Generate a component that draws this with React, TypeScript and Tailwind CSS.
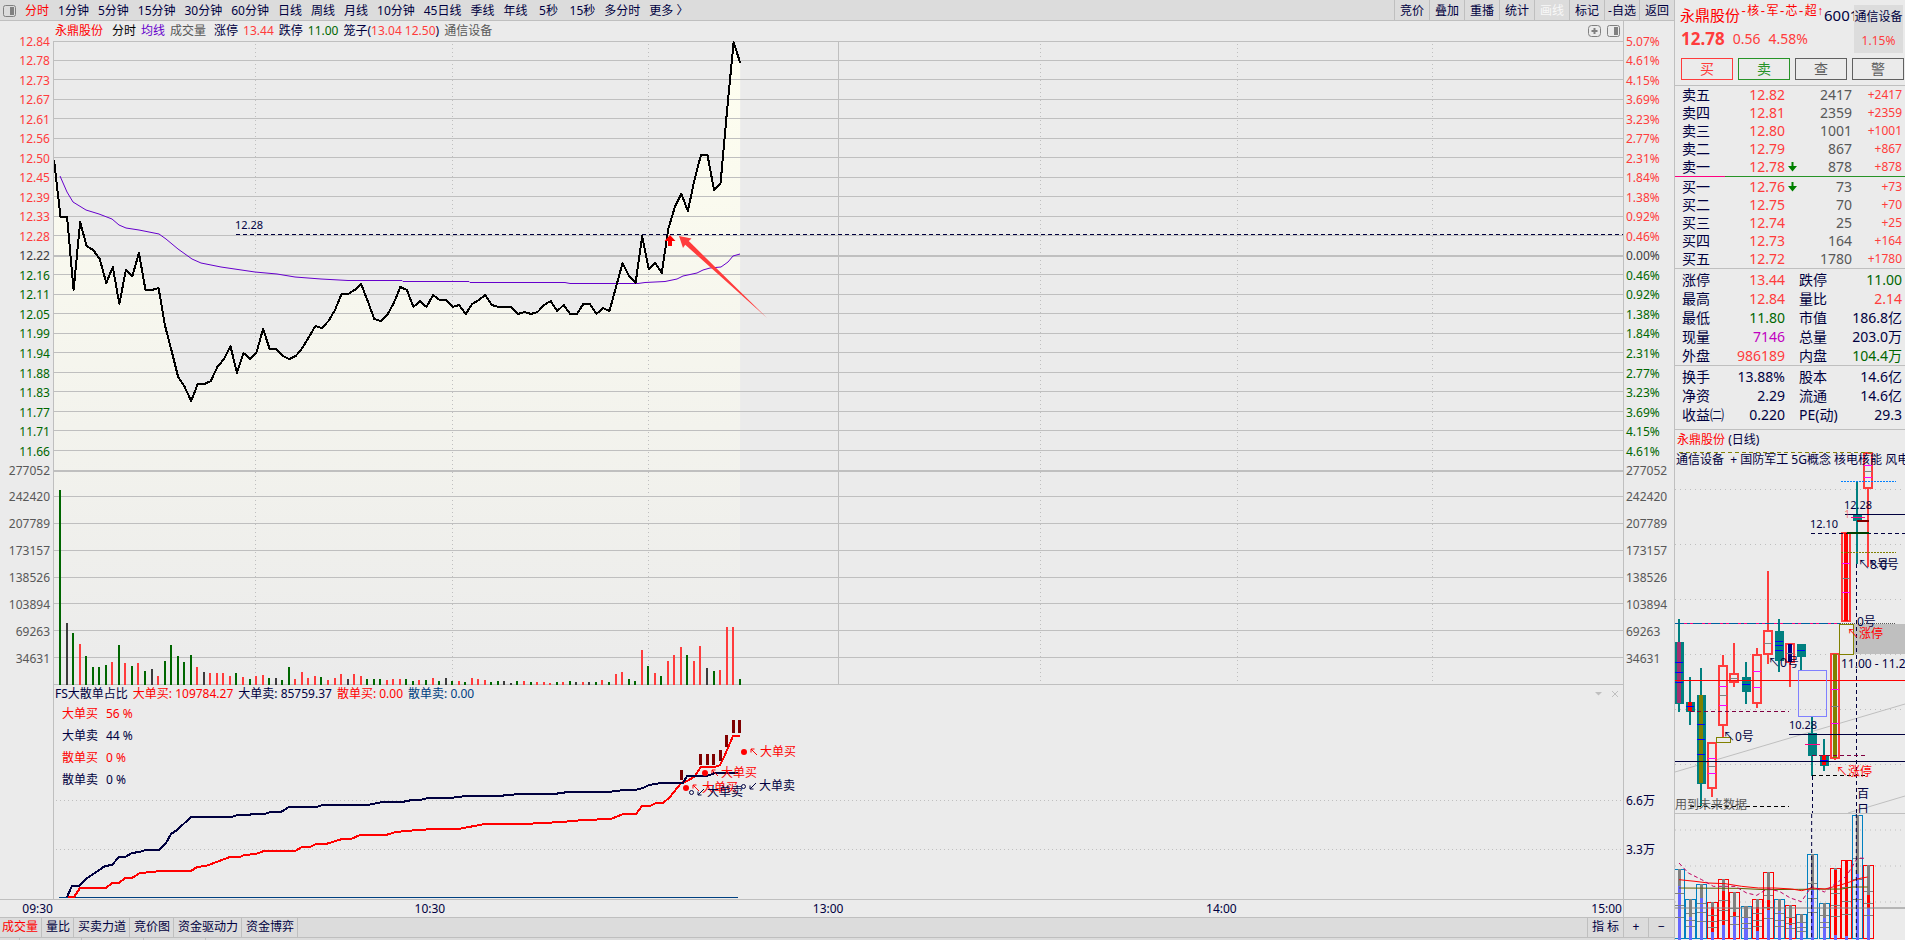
import { clsx } from "clsx";

const periods = [
  "分时", "1分钟", "5分钟", "15分钟", "30分钟", "60分钟", "日线", "周线", "月线", "10分钟",
  "45日线", "季线", "年线", "5秒", "15秒", "多分时", "更多 〉",
];
const tools = ["竞价", "叠加", "重播", "统计", "画线", "标记", "-自选", "返回"];
const tabs = ["成交量", "量比", "买卖力道", "竞价图", "资金驱动力", "资金博弈"];

const priceLabels = [
  "12.84", "12.78", "12.73", "12.67", "12.61", "12.56", "12.50", "12.45", "12.39", "12.33", "12.28",
  "12.22", "12.16", "12.11", "12.05", "11.99", "11.94", "11.88", "11.83", "11.77", "11.71", "11.66",
];
const percentLabels = [
  "5.07%", "4.61%", "4.15%", "3.69%", "3.23%", "2.77%", "2.31%", "1.84%", "1.38%", "0.92%", "0.46%",
  "0.00%", "0.46%", "0.92%", "1.38%", "1.84%", "2.31%", "2.77%", "3.23%", "3.69%", "4.15%", "4.61%",
];
const volumeLabels = ["242420", "207789", "173157", "138526", "103894", "69263", "34631"];

// plot coordinates: x 54..1623 covers 240 minutes
const LEFT = 54;
const STEP = 6.535;

const priceRows = [
  41, 60, 79, 99, 118, 138, 157, 177, 196, 216, 235, 274, 294, 313, 333, 352, 372, 391, 411, 430, 450,
  496, 523, 550, 577, 603, 630, 657, 684,
];
const timeCols = [255, 452, 648, 1040, 1237, 1432];

const price = [
  160, 217, 217, 290, 222, 246, 250, 259, 283, 267, 304, 270, 276, 253, 290, 290, 288, 326, 351, 377,
  387, 401, 384, 384, 381, 367, 359, 346, 373, 353, 359, 352, 329, 349, 349, 356, 359, 356, 348, 337,
  326, 328, 321, 310, 294, 294, 290, 284, 301, 319, 321, 315, 303, 287, 290, 307, 301, 307, 295, 300,
  300, 307, 305, 314, 304, 300, 295, 305, 307, 307, 307, 314, 312, 314, 312, 305, 301, 311, 305, 314,
  314, 304, 304, 314, 308, 311, 287, 263, 276, 283, 236, 269, 263, 273, 229, 207, 194, 211, 180, 155,
  155, 190, 183, 110, 42, 63,
];

const average =
  "60,176 67,192 73,202 86,210 99,214 112,219 119,225 126,228 139,230 159,234 166,239 178,249 192,259 201,263 221,267 255,272 277,274 295,277 321,279 348,280.5 402,280.5 403,281.5 469,281.5 470,282.5 565,282.5 570,283.5 638,283.5 645,282.5 665,281.5 677,279 683,276 697,273 703,270 710,268 721,267 728,262 733,256 740,254";

// r = up, g = down, k = flat
const volume = (
  "g195 k62 g52 r41 g29 g18 g18 g20 r23 g40 r22 g19 r22 g14 k16 r9 g24 g40 g29 g23 g30 r18 k13 r12 r12 r12 r9 g12 r8 g6 " +
  "r9 r10 g7 k7 g5 g18 r6 r13 r7 r9 g8 r5 r7 r11 k6 r11 r9 g6 g6 g6 r5 r6 r6 g6 g4 r5 g5 r7 g4 k7 g4 r4 g3 r7 r6 r5 g3 " +
  "g4 k4 k2 g4 r4 g3 r3 r3 r2 g3 r3 g4 k3 r3 k3 g3 r5 g3 r11 r13 g6 g4 r35 g19 r12 g9 r24 r30 r38 g30 r24 r39 k17 g14 " +
  "r15 r58 r58 g6"
).split(" ");
const volumeColor: Record<string, string> = { r: "#ff3c3c", g: "#006600", k: "#3c3c3c" };

const bigSell =
  "67,897 72,886 79,886 86,879 105,866 112,865 119,857 125,857 132,853 139,852 146,850 159,850 166,843 171,834 177,830 191,817 231,817 238,815 249,815 252,814 265,814 270,812 281,812 289,807 317,807 322,805 367,805 383,802 402,802 412,800 420,800 428,798 450,798 466,796 498,796 520,794 554,794 568,792 608,792 624,790 635,790 643,788 649,785 661,783 683,783 687,776 707,776 715,773 738,773";
const bigBuy =
  "68,897 74,897 80,888 106,888 112,883 119,883 125,878 132,878 140,873 153,872 159,871 191,871 197,867 206,866 230,857 240,857 244,855 256,854 264,851 295,851 302,847 310,847 316,844 326,844 342,839 351,839 360,835 386,835 396,832 418,830 434,829 458,829 485,824 524,824 562,822 584,820 611,819 623,814 636,814 642,806 650,806 656,803 663,803 670,797 681,783 687,781 694,777 701,767 715,767 720,765 724,757 733,736 740,736";
const signals = [
  [680, 770, 10], [699, 754, 11], [706, 754, 11], [712, 754, 11],
  [719, 750, 11], [725, 735, 12], [732, 720, 13], [738, 720, 13],
];

// overlay labels of the large-order pane, offsets from the plot's corner
const marks = [
  { x: 686, y: 788, text: "大单买", buy: true },
  { x: 705, y: 773, text: "大单买", buy: true },
  { x: 744, y: 752, text: "大单买", buy: true },
  { x: 692, y: 792, text: "大单卖", buy: false },
  { x: 744, y: 786, text: "大单卖", buy: false },
];

const asks = [
  ["卖五", "12.82", "", "2417", "+2417"],
  ["卖四", "12.81", "", "2359", "+2359"],
  ["卖三", "12.80", "", "1001", "+1001"],
  ["卖二", "12.79", "", "867", "+867"],
  ["卖一", "12.78", "down", "878", "+878"],
];
const bids = [
  ["买一", "12.76", "down", "73", "+73"],
  ["买二", "12.75", "", "70", "+70"],
  ["买三", "12.74", "", "25", "+25"],
  ["买四", "12.73", "", "164", "+164"],
  ["买五", "12.72", "", "1780", "+1780"],
];

const R = "text-[#ff3c3c]";
const G = "text-[#006600]";
const N = "text-[#00003f]";
const stats = [
  ["涨停", "13.44", R, "跌停", "11.00", G],
  ["最高", "12.84", R, "量比", "2.14", R],
  ["最低", "11.80", G, "市值", "186.8亿", N],
  ["现量", "7146", "text-[#c000c0]", "总量", "203.0万", N],
  ["外盘", "986189", R, "内盘", "104.4万", G],
];
const basics = [
  ["换手", "13.88%", N, "股本", "14.6亿", N],
  ["净资", "2.29", N, "流通", "14.6亿", N],
  ["收益㈡", "0.220", N, "PE(动)", "29.3", N],
];

function PanelIcon({ className }: { className?: string }) {
  return (
    <svg viewBox="0 0 13 12" className={clsx("w-[13px] h-[12px]", className)} fill="none">
      <rect x="0.5" y="0.5" width="12" height="11" rx="2" stroke="#808080" />
      <rect x="7" y="2" width="4" height="8" fill="#808080" />
    </svg>
  );
}

function DownArrow() {
  return (
    <svg viewBox="0 0 9 10" className="w-[9px] h-[10px]">
      <path d="M3.500 0h2v4H9L4.500 9.500 0 4h3.500z" fill="#008000" />
    </svg>
  );
}

function labelTone(i: number) {
  if (i < 11) return "text-[#ff3c3c]";
  return i === 11 ? "text-[#3c3c3c]" : "text-[#006600]";
}

function Axis({ labels, side }: { labels: string[]; side: "left" | "right" }) {
  return (
    <div
      className={clsx(
        "shrink-0 border-[#bfbfbf] text-[#585858]",
        side === "left" ? "w-[54px] border-r pr-[3px] text-right" : "w-[51px] border-l pl-[2px]"
      )}
    >
      <div className="-mt-[9px] h-[449px] flex flex-col">
        {labels.map((l, i) => (
          <div key={i} className={clsx("flex-1 flex flex-col justify-center", labelTone(i))}>{l}</div>
        ))}
        <div className="flex-1 flex flex-col justify-center">277052</div>
      </div>
      <div className="mt-[3px] h-[188px] flex flex-col">
        {volumeLabels.map(l => (
          <div key={l} className="flex-1 flex flex-col justify-center">{l}</div>
        ))}
      </div>
    </div>
  );
}

function PriceChart() {
  const points = price.map((y, i) => `${LEFT + i * STEP},${y}`);
  return (
    <svg viewBox="54 41 1569 644" preserveAspectRatio="none" className="absolute inset-0 w-full h-full">
      <defs>
        <linearGradient id="area" gradientUnits="userSpaceOnUse" x1="0" y1="41" x2="0" y2="685">
          <stop offset="0" stopColor="#fffff0" />
          <stop offset="1" stopColor="#ebebeb" />
        </linearGradient>
      </defs>
      <polygon points={`${points.join(" ")} 740,685 54,685`} fill="url(#area)" />
      <g fill="#bfbfbf" shapeRendering="crispEdges">
        {priceRows.map(y => <rect key={y} x="54" y={y} width="1569" height="1" />)}
        <rect x="54" y="255" width="1569" height="2" />
        <rect x="54" y="470" width="1569" height="2" />
        <rect x="838" y="41" width="1" height="644" />
      </g>
      <g stroke="#bfbfbf" strokeDasharray="1 3" shapeRendering="crispEdges">
        {timeCols.map(x => <path key={x} d={`M${x + 0.5} 44V684`} />)}
      </g>
      <g shapeRendering="crispEdges">
        {volume.map((v, i) => {
          const h = Number(v.slice(1));
          return (
            <rect key={i} x={Math.floor(LEFT + (i + 1) * STEP) - 1} y={685 - h} width="2" height={h} fill={volumeColor[v[0]]} />
          );
        })}
      </g>
      <polyline points={average} fill="none" stroke="#6600cc" />
      <polyline points={points.join(" ")} fill="none" stroke="#000" strokeWidth="2" strokeLinejoin="round" shapeRendering="crispEdges" />
      <path d="M236 234.500H1623" stroke="#00003f" strokeDasharray="4 3" shapeRendering="crispEdges" />
      <path d="M670 235l5.500 6h-3.500v5h-4v-5h-3.500z" fill="#f00" />
      <path d="M679 236l12.500 2.500-2.700 2.600L767 318 685.200 244.700 683 248z" fill="#ff3c3c" />
    </svg>
  );
}

function OrderChart() {
  return (
    <svg viewBox="54 685 1569 214" preserveAspectRatio="none" className="absolute inset-0 w-full h-full">
      <g stroke="#bfbfbf" strokeDasharray="1 3" shapeRendering="crispEdges">
        <path d="M56 800.500H1623M56 849.500H1623" />
      </g>
      <path d="M59 897.500H738" stroke="#004080" shapeRendering="crispEdges" />
      <g fill="none" strokeWidth="2" shapeRendering="crispEdges">
        <polyline points={bigBuy} stroke="#f00" />
        <polyline points={bigSell} stroke="#00003f" />
      </g>
      {signals.map(([x, y, h]) => <rect key={x} x={x} y={y} width="3" height={h} fill="#7f0000" />)}
    </svg>
  );
}

type Candle = {
  x: number;
  wick: [number, number];
  body: [number, number];
  up?: boolean;
  core?: string;
  ticks?: [number, string][];
};

const B = "#0000ff";
const M = "#ff00ff";
const K = "#808080";
const candles: Candle[] = [
  { x: 1679, wick: [619, 712], body: [642, 703], core: "#a03070", ticks: [[662, B], [672, B], [682, B]] },
  { x: 1690, wick: [677, 725], body: [702, 711], core: "#f00", ticks: [[706, B]] },
  { x: 1701, wick: [668, 806], body: [695, 783], core: "#808000", ticks: [[724, B], [739, B], [754, B]] },
  { x: 1712, wick: [742, 797], body: [743, 788], up: true, ticks: [[758, M], [766, K], [773, M]] },
  { x: 1723, wick: [655, 737], body: [666, 725], up: true, ticks: [[686, M], [695, K], [705, M]] },
  { x: 1734, wick: [643, 687], body: [674, 682], up: true, ticks: [[678, K]] },
  { x: 1746, wick: [662, 704], body: [677, 691], ticks: [[684, B]] },
  { x: 1757, wick: [648, 708], body: [655, 703], up: true, ticks: [[671, M], [687, M]] },
  { x: 1768, wick: [571, 664], body: [631, 654], up: true, ticks: [[643, K]] },
  { x: 1779, wick: [619, 672], body: [631, 660], ticks: [[641, B], [645, B], [650, B]] },
  { x: 1790, wick: [644, 687], body: [644, 662], up: true, core: "#000080", ticks: [[653, K]] },
  { x: 1801, wick: [644, 670], body: [644, 656], ticks: [[650, B]] },
  { x: 1812, wick: [716, 776], body: [733, 755], ticks: [[744, M]] },
  { x: 1824, wick: [739, 771], body: [755, 765], core: "#f00", ticks: [[760, B]] },
  { x: 1835, wick: [654, 760], body: [654, 758], up: true, core: "#808000", ticks: [[689, M], [706, K], [723, M]] },
  { x: 1846, wick: [533, 621], body: [533, 621], up: true, core: "#f00", ticks: [[563, M], [578, K], [592, M]] },
  { x: 1857, wick: [482, 564], body: [514, 520], ticks: [[517, "#ff0080"]] },
  { x: 1868, wick: [453, 567], body: [453, 488], up: true, ticks: [[465, M], [471, K], [477, M]] },
];

function DailyCandles() {
  return (
    <svg
      viewBox="1675 450 230 363"
      className="block w-[230px] h-[363px] text-[12px]"
      fill="#00003f"
    >
      <g stroke="#bfbfbf" fill="none">
        <path d="M1675 489.500h230M1675 544.500h230M1675 599.500h230M1675 654.500h230M1675 709.500h230M1675 764.500h230" strokeDasharray="1 4" />
        <path d="M1675 772L1905 704M1848 813L1905 796" />
      </g>
      <rect x="1854" y="624" width="51" height="30" fill="#bfbfbf" />
      {candles.map(c => (
        <g key={c.x} shapeRendering="crispEdges">
          <rect x={c.x - 1} y={c.wick[0]} width="2" height={c.wick[1] - c.wick[0]} fill={c.up ? "#ff3c3c" : "#008080"} />
          <rect
            x={c.x - 4}
            y={c.body[0]}
            width="8"
            height={c.body[1] - c.body[0]}
            fill={c.up ? "#ebebeb" : "#008080"}
            stroke={c.up ? "#ff3c3c" : "#008080"}
            strokeWidth={c.up ? 2 : 1}
          />
          {c.core && <rect x={c.x - 2} y={c.body[0]} width="4" height={c.body[1] - c.body[0]} fill={c.core} />}
          {c.ticks?.map(([y, color]) => <rect key={y} x={c.x - 4} y={y} width="8" height="1" fill={color} />)}
        </g>
      ))}
      <g fill="none" shapeRendering="crispEdges">
        <path d="M1679 452.500H1873" stroke="#808000" strokeDasharray="4 3" />
        <path d="M1841 481.500H1896" stroke="#0080ff" strokeDasharray="2 1" />
        <path d="M1841 552.500H1896" stroke="#808000" strokeDasharray="2 1" />
        <path d="M1675 623.500H1840" stroke="#ff0080" />
        <path d="M1675 623.500H1840" stroke="#0060a0" strokeDasharray="9 3 3 3" />
        <path d="M1840 623.500H1896" stroke="#585858" strokeDasharray="1 1" />
        <path d="M1675 680.500H1905" stroke="#f00" />
        <path d="M1675 761.500H1905M1789 734.500H1905M1845 514.500H1905" stroke="#00003f" />
        <path d="M1811 533.500H1905M1856.500 564V813M1812.500 776V813" stroke="#00003f" strokeDasharray="4 3" />
        <path d="M1847 532.500H1869" stroke="#003f00" strokeWidth="2" />
        <path d="M1857 520.500H1869" stroke="#7f0000" strokeWidth="2" />
        <path d="M1851 517.500H1865M1805 744.500H1820" stroke="#ff0080" />
        <path d="M1690 711.500H1789M1812 755.500H1868" stroke="#7f0040" strokeDasharray="4 3" />
        <path d="M1812 775.500H1868M1690 806.500H1789" stroke="#000" strokeDasharray="4 3" />
        <rect x="1798.500" y="670.500" width="28" height="46" stroke="#8080ff" />
        <rect x="1839.500" y="624.500" width="14" height="30" stroke="#808000" />
        <rect x="1716.500" y="737.500" width="14" height="5" stroke="#808000" />
      </g>
      <text x="1676" y="464" className="whitespace-pre">通信设备  + 国防军工 5G概念 核电核能 风电</text>
      <g className="text-[11px]">
        <text x="1844" y="509">12.28</text>
        <text x="1810" y="528">12.10</text>
        <text x="1789" y="729">10.28</text>
        <text x="1844" y="518" fill="#ff3c3c" fillOpacity="0.6">1</text>
      </g>
      <text x="1858" y="569">↖8号</text>
      <text x="1868" y="569">↖0号</text>
      <text x="1857" y="626">0号</text>
      <text x="1847" y="638" fill="#f00">↖涨停</text>
      <text x="1768" y="667">↖0号</text>
      <text x="1841" y="668">11.00 - 11.28</text>
      <text x="1723" y="741">↖0号</text>
      <text x="1836" y="776" fill="#f00">↖涨停</text>
      <text x="1857" y="798">百</text>
      <text x="1857" y="814">日</text>
      <text x="1675" y="809" fill="#585858">用到未来数据</text>
    </svg>
  );
}

// [centre, top, top of the red part, top of the blue part], three units to the pixel
const dailyVolume = [
  [43, 568, 0, 620], [77, 658, 0, 711], [109, 613, 0, 656], [142, 667, 682, 758], [175, 598, 635, 735],
  [208, 637, 698, 713], [243, 679, 0, 714], [277, 658, 682, 755], [310, 577, 662, 690], [343, 658, 0, 693],
  [376, 676, 711, 737], [409, 703, 0, 730], [442, 523, 0, 628], [478, 670, 0, 714], [511, 565, 572, 767],
  [544, 541, 542, 770], [577, 406, 0, 582], [610, 556, 645, 685],
];

function DailyVolume() {
  return (
    <svg viewBox="30 403 690 378" className="block w-[230px] h-[126px]" fill="none">
      <g stroke="#bfbfbf" strokeWidth="3" strokeDasharray="3 12">
        <path d="M30 451H720M30 559H720M30 667H720" />
      </g>
      {dailyVolume.map(([x, top, red, blue]) => (
        <g key={x} shapeRendering="crispEdges">
          <rect x={x - 15} y={top} width="30" height={777 - top} stroke={red ? "#f00" : "#0080c0"} strokeWidth="3" />
          <rect x={x - 5} y={top} width="10" height={780 - top} fill="#808080" />
          {red > 0 && <rect x={x - 5} y={red} width="10" height={blue - red} fill="#f00" />}
          <rect x={x - 5} y={blue} width="10" height={780 - blue} fill="#6666ff" />
          <path
            d={`M${x - 14} ${top + (780 - top) * 0.35}h28M${x - 14} ${top + (780 - top) * 0.52}h28M${x - 14} ${top + (780 - top) * 0.68}h28`}
            stroke="#808080"
            strokeWidth="3"
          />
        </g>
      ))}
      <path d="M30 685H720" stroke="#808080" strokeWidth="3" />
      <polyline points="42,625 220,626 300,630 400,629 530,628 560,622 608,622" stroke="#606000" strokeWidth="3" />
      <polyline points="42,600 90,605 130,610 180,612 230,620 280,625 330,625 380,628 410,633 440,625 480,628 530,615 560,605 580,597 608,592" stroke="#f00" strokeWidth="3" />
      <polyline points="42,550 70,580 110,600 145,620 210,620 245,640 275,647 308,627 343,635 376,655 409,666 440,620 478,637 511,612 544,590 577,535 600,536" stroke="#c00060" strokeWidth="3" strokeDasharray="12 8" />
      <path d="M440 403V780M574 403V780" stroke="#00003f" strokeWidth="3" strokeDasharray="12 9" />
    </svg>
  );
}

function BookTable({ rows }: { rows: string[][] }) {
  return (
    <table className="w-full table-fixed text-sm">
      <colgroup>
        <col className="w-[50px]" />
        <col className="w-[60px]" />
        <col className="w-[14px]" />
        <col className="w-[53px]" />
        <col />
      </colgroup>
      <tbody>
        {rows.map(([name, value, dir, size, diff]) => (
          <tr key={name} className="h-[18px] leading-[18px]">
            <th scope="row" className="pl-[7px] text-left font-normal text-[#00003f]">{name}</th>
            <td className="text-right text-[#ff3c3c]">{value}</td>
            <td className="pl-[3px]">{dir && <DownArrow />}</td>
            <td className="text-right text-[#585858]">{size}</td>
            <td className="pr-[3px] text-right text-[12px] text-[#ff3c3c]">{diff}</td>
          </tr>
        ))}
      </tbody>
    </table>
  );
}

function StatTable({ rows }: { rows: string[][] }) {
  return (
    <table className="w-full table-fixed text-sm whitespace-nowrap">
      <colgroup>
        <col className="w-[50px]" />
        <col className="w-[60px]" />
        <col className="w-[60px]" />
        <col />
      </colgroup>
      <tbody>
        {rows.map(([a, av, ac, b, bv, bc]) => (
          <tr key={a} className="h-[19px] leading-[19px]">
            <th scope="row" className="pl-[7px] text-left font-normal text-[#00003f]">{a}</th>
            <td className={clsx("text-right", ac)}>{av}</td>
            <th scope="row" className="pl-[14px] text-left font-normal text-[#00003f]">{b}</th>
            <td className={bc}>
              <div className="flex justify-end pr-[3px]">{bv}</div>
            </td>
          </tr>
        ))}
      </tbody>
    </table>
  );
}

function QuotePanel() {
  return (
    <aside className="w-[231px] shrink-0 flex flex-col overflow-hidden border-l border-[#bfbfbf]">
      <div className="flex">
        <div className="w-[179px] overflow-hidden whitespace-nowrap pl-[5px]">
          <div className="flex h-[30px] items-center">
            <h1 className="text-[15px] text-[#f00]">永鼎股份</h1>
            <span className="mb-[6px] text-[12px] text-[#f00] font-['Liberation_Mono','Noto_Sans_CJK_SC',monospace]">-核-军-芯-超↑</span>
            <span className="text-[15px]">6001</span>
          </div>
          <div className="flex h-[18px] items-center gap-2 pl-[1px] text-sm text-[#ff3c3c]">
            <b className="text-[17px]">12.78</b>
            <span>0.56</span>
            <span>4.58%</span>
          </div>
        </div>
        <div className="mt-[5px] h-[48px] w-[49px] shrink-0 bg-[#dcdcdc] text-center">
          <div className="h-[24px] leading-[24px] whitespace-nowrap">通信设备</div>
          <div className="h-[24px] leading-[24px] text-[#ff3c3c]">1.15%</div>
        </div>
      </div>
      <div className="mt-[5px] flex gap-[5px] pl-[6px] pr-[1px] text-sm">
        <button type="button" className="h-[22px] flex-1 border border-[#ff3c3c] text-[#ff3c3c]">买</button>
        <button type="button" className="h-[22px] flex-1 border border-[#279327] text-[#279327]">卖</button>
        <button type="button" className="h-[22px] flex-1 border border-[#606060] text-[#606060]">查</button>
        <button type="button" className="h-[22px] flex-1 border border-[#606060] text-[#606060]">警</button>
      </div>
      <div className="mt-[5px] border-t border-[#bfbfbf]">
        <BookTable rows={asks} />
      </div>
      <div className="flex h-px">
        <div className="w-[50px] bg-[#ff0080]" />
        <div className="flex-1 bg-[#279327]" />
      </div>
      <div className="pt-px">
        <BookTable rows={bids} />
      </div>
      <div className="border-t border-[#bfbfbf] pt-px">
        <StatTable rows={stats} />
      </div>
      <div className="border-t border-[#bfbfbf] pt-px">
        <StatTable rows={basics} />
      </div>
      <div className="mt-[5px] border-t border-[#bfbfbf]">
        <h2 className="h-[20px] pl-[2px] leading-[20px]">
          <span className="text-[#f00]">永鼎股份</span> (日线)
        </h2>
        <DailyCandles />
        <div className="border-t border-[#bfbfbf]">
          <DailyVolume />
        </div>
      </div>
    </aside>
  );
}

export default function App() {
  return (
    <div className="flex h-screen min-h-[900px] overflow-hidden bg-[#ebebeb] text-[12px] leading-none text-[#00003f] font-['Noto_Sans','Noto_Sans_CJK_SC',sans-serif]">
      <main className="flex min-w-0 flex-1 flex-col">
        {/* period toolbar */}
        <nav className="flex h-[21px] shrink-0 items-stretch border-b border-[#bfbfbf] bg-[#dcdcdc]">
          <div className="flex flex-1 items-center gap-[9px] pl-[3px] pt-[2px]">
            <PanelIcon />
            {periods.map((p, i) => (
              <button
                key={p}
                type="button"
                className={clsx("min-w-[24px] whitespace-nowrap", i === 0 && "text-[#f00]")}
              >
                {p}
              </button>
            ))}
          </div>
          {tools.map(t => (
            <button
              key={t}
              type="button"
              className={clsx("w-[35px] whitespace-nowrap border-l border-[#bfbfbf] pt-[2px]", t === "画线" && "text-[#f8f8f8]")}
            >
              {t}
            </button>
          ))}
        </nav>

        {/* legend */}
        <div className="flex h-[20px] shrink-0">
          <div className="flex flex-1 items-center gap-[5px] pl-[55px] pr-[3px]">
            <span className="mr-[4px] text-[#f00]">永鼎股份</span>
            <span className="text-black">分时</span>
            <span className="text-[#6600cc]">均线</span>
            <span className="mr-[3px] text-[#585858]">成交量</span>
            <span>涨停</span>
            <span className="text-[#ff3c3c]">13.44</span>
            <span>跌停</span>
            <span className="text-[#006600]">11.00</span>
            <span>
              笼子(<span className="text-[#ff3c3c]">13.04 12.50</span>)
            </span>
            <span className="text-[#585858]">通信设备</span>
            <svg viewBox="0 0 13 12" className="ml-auto w-[13px] h-[12px]" fill="none" stroke="#808080">
              <rect x="0.5" y="0.5" width="12" height="11" rx="3" />
              <path d="M6.500 3v6M3.500 6h6" strokeWidth="2" />
            </svg>
            <PanelIcon className="ml-[1px]" />
          </div>
          <div className="w-[51px] border-l border-[#bfbfbf]" />
        </div>

        {/* price and volume */}
        <section className="flex h-[644px] shrink-0">
          <Axis labels={priceLabels} side="left" />
          <div className="relative flex-1">
            <PriceChart />
            <span className="absolute left-[181px] top-[178px] text-[11px]">12.28</span>
          </div>
          <Axis labels={percentLabels} side="right" />
        </section>

        {/* large and small orders */}
        <section className="flex min-h-0 flex-1">
          <div className="w-[54px] shrink-0 border-r border-[#bfbfbf]" />
          <div className="relative flex-1">
            <OrderChart />
            <div className="relative flex h-[18px] items-center gap-[5px] pl-px pr-[4px]">
              <span>FS大散单占比</span>
              <span className="text-[#f00]">大单买: 109784.27</span>
              <span>大单卖: 85759.37</span>
              <span className="text-[#f00]">散单买: 0.00</span>
              <span className="text-[#004080]">散单卖: 0.00</span>
              <svg viewBox="0 0 24 8" className="ml-auto w-[24px] h-[8px]" stroke="#bfbfbf">
                <path d="M0 2h7L3.500 5.500z" fill="#bfbfbf" stroke="none" />
                <path d="M17 1l6 6M23 1l-6 6" />
              </svg>
            </div>
            <dl className="relative grid w-[100px] auto-rows-[22px] grid-cols-[36px_1fr] items-center gap-x-2 pl-[8px]">
              <dt className="text-[#f00]">大单买</dt>
              <dd className="text-[#f00]">56 %</dd>
              <dt>大单卖</dt>
              <dd>44 %</dd>
              <dt className="text-[#f00]">散单买</dt>
              <dd className="text-[#f00]">0 %</dd>
              <dt>散单卖</dt>
              <dd>0 %</dd>
            </dl>
            {marks.map(m => (
              <span
                key={`${m.x}-${m.y}`}
                className={clsx("absolute flex items-center whitespace-nowrap", m.buy && "text-[#f00]")}
                style={{ left: m.x - LEFT - 3, top: m.y - 685 - 6 }}
              >
                <i
                  className={clsx(
                    "mr-[3px] rounded-full",
                    m.buy ? "h-[6px] w-[6px] bg-[#f00]" : "h-[5px] w-[5px] border border-[#00003f]"
                  )}
                />
                <svg viewBox="0 0 8 8" className="mr-[2px] w-[8px] h-[8px]" fill="none" stroke="currentColor">
                  {m.buy ? <path d="M7 7L1 1M1 4.500V1h3.500" /> : <path d="M7 1L1 7M1 3.500V7h3.500" />}
                </svg>
                {m.text}
              </span>
            ))}
          </div>
          <div className="w-[51px] border-l border-[#bfbfbf] pl-[2px] pt-[91px]">
            <div className="h-[49px] leading-[49px]">6.6万</div>
            <div className="h-[49px] leading-[49px]">3.3万</div>
          </div>
        </section>

        {/* time axis */}
        <div className="flex h-[18px] shrink-0 border-t border-[#bfbfbf]">
          <div className="grid flex-1 grid-cols-[53px_392fr_398fr_393fr_385fr] items-center pr-px text-right">
            <span>09:30</span>
            <span>10:30</span>
            <span>13:00</span>
            <span>14:00</span>
            <span>15:00</span>
          </div>
          <div className="w-[51px] border-l border-[#bfbfbf]" />
        </div>

        {/* indicator tabs */}
        <nav className="flex h-[20px] shrink-0 border-t border-[#bfbfbf] bg-[#dcdcdc]">
          {tabs.map((t, i) => (
            <button
              key={t}
              type="button"
              className={clsx("border-r border-[#bfbfbf] pb-px pr-[3px]", i === 0 ? "pl-[2px] text-[#f00]" : "pl-[4px]")}
            >
              {t}
            </button>
          ))}
          <button type="button" className="ml-auto w-[36px] border-l border-[#bfbfbf] pb-px">指 标</button>
          <button type="button" className="w-[25px] border-l border-[#bfbfbf] pb-px">+</button>
          <button type="button" className="w-[26px] border-l border-[#bfbfbf] pb-px">−</button>
        </nav>
        <div className="flex h-[3px] shrink-0 border-t border-[#bfbfbf] bg-[#dcdcdc]">
          <div className="w-[20px] border-r border-[#bfbfbf]" />
          <div className="w-[62px] border-r border-[#bfbfbf]" />
          <div className="w-[62px] border-r border-[#bfbfbf]" />
          <div className="w-[62px] border-r border-[#bfbfbf]" />
        </div>
      </main>

      <QuotePanel />
    </div>
  );
}
